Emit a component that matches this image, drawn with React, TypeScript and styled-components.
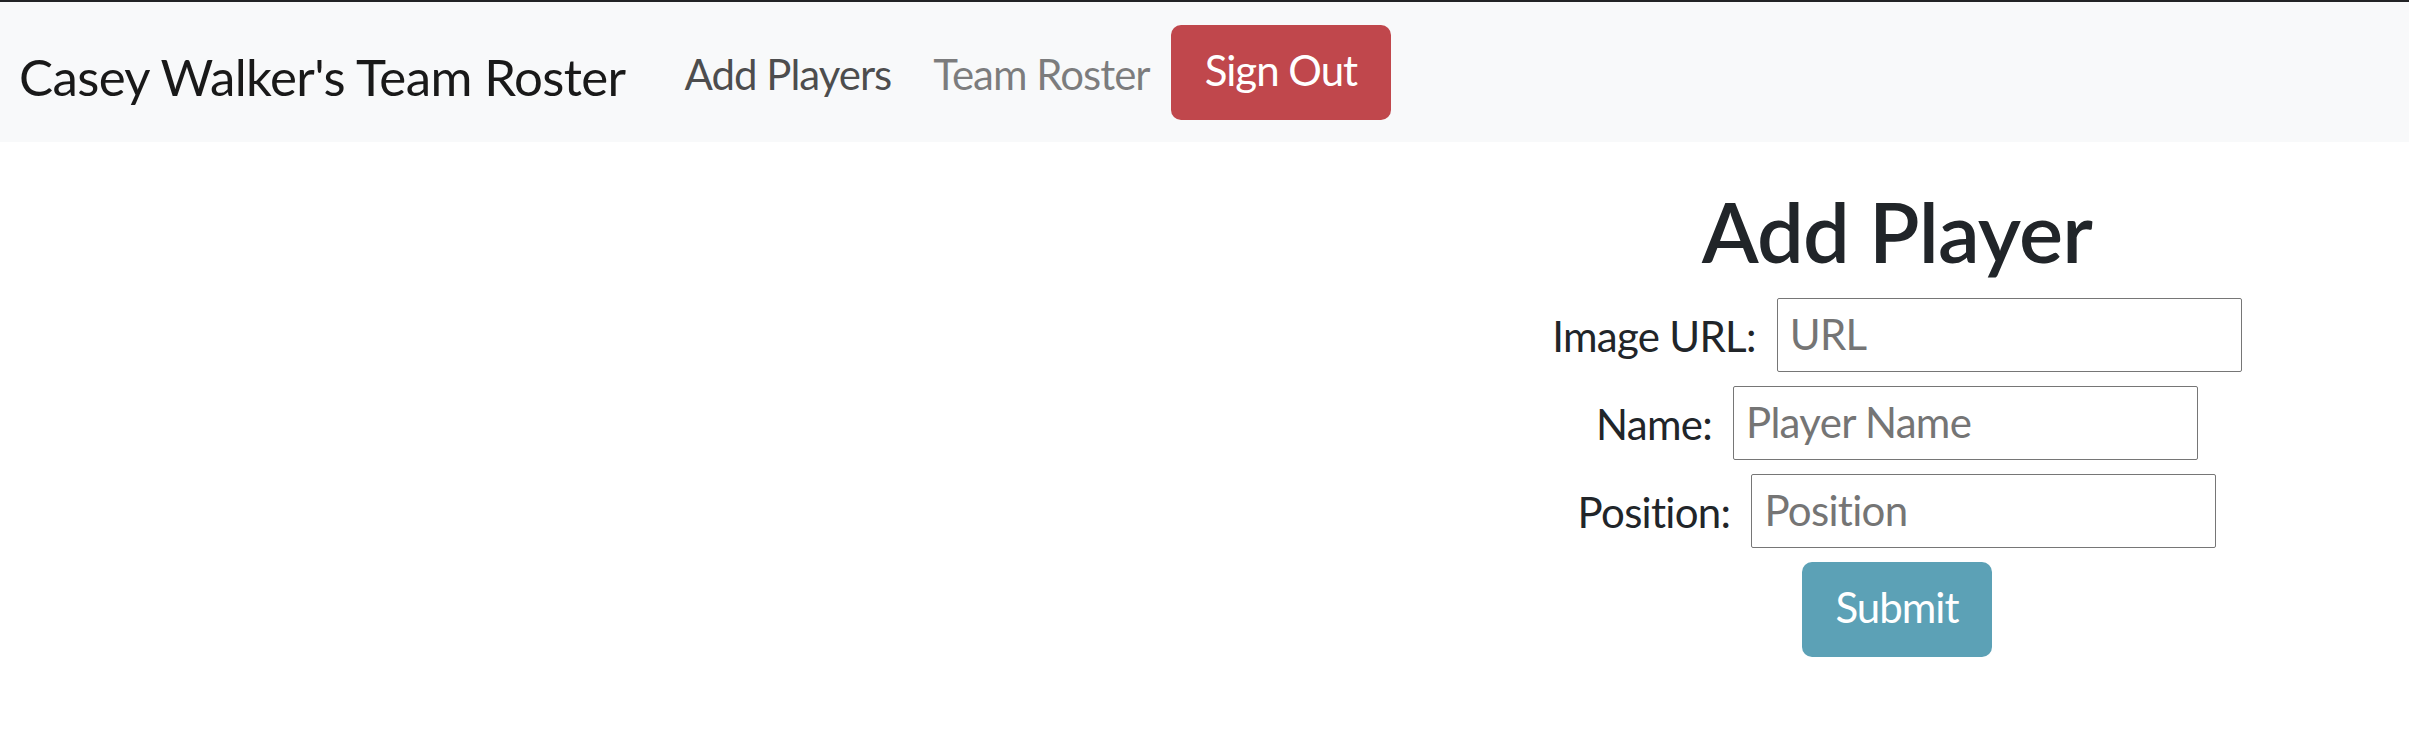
import React, { useState } from 'react';
import { styled, createGlobalStyle } from 'styled-components';

const GlobalStyle = createGlobalStyle`
  body {
    margin: 0;
    background: #fff;
    color: #212529;
    font-family: Lato, 'Noto Sans', sans-serif;
  }
  * {
    box-sizing: border-box;
  }
`;

const Navbar = styled.nav`
  display: flex;
  align-items: center;
  height: 142px;
  padding: 0 19px;
  background: #f8f9fa;
  border-top: 2px solid #222326;
`;

const Brand = styled.a`
  font-size: 51px;
  letter-spacing: -0.6px;
  color: rgba(0, 0, 0, 0.9);
  text-decoration: none;
  margin-right: 38px;
  padding-top: 8px;
  white-space: nowrap;
`;

const NavLink = styled.a<{ $active?: boolean }>`
  font-size: 42px;
  letter-spacing: -1px;
  padding: 4px 21px 0;
  color: ${({ $active }) => ($active ? 'rgba(0, 0, 0, 0.7)' : 'rgba(0, 0, 0, 0.5)')};
  text-decoration: none;
  cursor: pointer;
  white-space: nowrap;
`;

const Button = styled.button<{ $color: string }>`
  display: inline-flex;
  align-items: center;
  justify-content: center;
  height: 95px;
  padding: 0 34px 4px;
  border: none;
  border-radius: 10px;
  background: ${({ $color }) => $color};
  color: #fff;
  font-family: inherit;
  font-size: 42px;
  letter-spacing: -1px;
  cursor: pointer;
`;

const Main = styled.main`
  display: grid;
  grid-template-columns: 1385px 1fr;
`;

const FormColumn = styled.form`
  grid-column: 2;
  display: flex;
  flex-direction: column;
  align-items: center;
  gap: 14px;
`;

const Title = styled.h2`
  margin: 40px 0 2px;
  font-size: 83px;
  font-weight: 600;
  letter-spacing: -0.8px;
  line-height: 1.2;
  color: #212529;
`;

const Row = styled.div`
  display: flex;
  align-items: center;
  gap: 21px;
`;

const Label = styled.label`
  font-size: 42px;
  letter-spacing: -0.7px;
  color: #212529;
  padding-top: 2px;
`;

const Input = styled.input`
  width: 465px;
  height: 74px;
  padding: 0 12px 2px;
  border: 1px solid #767676;
  border-radius: 2px;
  font-family: inherit;
  font-size: 42px;
  letter-spacing: -0.7px;
  color: #212529;
  &::placeholder {
    color: #757575;
  }
`;

const fields = [
  { id: 'image', label: 'Image URL:', placeholder: 'URL' },
  { id: 'name', label: 'Name:', placeholder: 'Player Name' },
  { id: 'position', label: 'Position:', placeholder: 'Position' }
];

const App: React.FC = () => {
  const [values, setValues] = useState<Record<string, string>>({});

  return (
    <>
      <GlobalStyle />
      <Navbar>
        <Brand>Casey Walker's Team Roster</Brand>
        <NavLink $active>Add Players</NavLink>
        <NavLink>Team Roster</NavLink>
        <Button $color="#c0474c">Sign Out</Button>
      </Navbar>
      <Main>
        <FormColumn onSubmit={(e) => e.preventDefault()}>
          <Title>Add Player</Title>
          {fields.map((f) => (
            <Row key={f.id}>
              <Label htmlFor={f.id}>{f.label}</Label>
              <Input
                id={f.id}
                placeholder={f.placeholder}
                value={values[f.id] || ''}
                onChange={(e) => setValues({ ...values, [f.id]: e.target.value })}
              />
            </Row>
          ))}
          <Button type="submit" $color="#5ca1b6">
            Submit
          </Button>
        </FormColumn>
      </Main>
    </>
  );
};

export default App;
